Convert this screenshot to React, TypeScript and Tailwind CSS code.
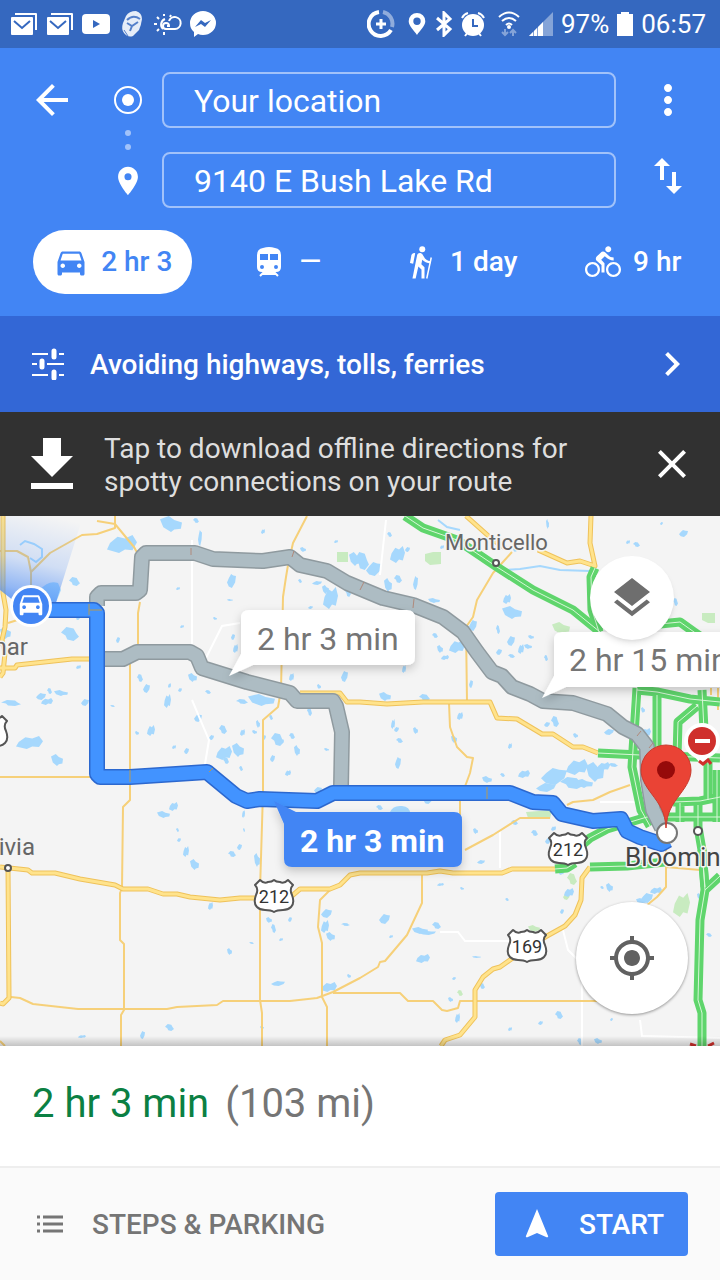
import React from 'react';
import {
  MdArrowBack,
  MdChevronRight,
  MdClose,
  MdDirectionsBike,
  MdDirectionsCar,
  MdLayers,
  MdMoreVert,
  MdMyLocation,
  MdNavigation,
  MdPlace,
  MdSwapVert,
} from 'react-icons/md';

// x, y, width, height of every lake on the map
const LAKES: [number, number, number, number][] = [
  [107, 535, 30, 18], [160, 516, 22, 16], [193, 518, 6, 5], [198, 530, 4, 16], [261, 529, 4, 5], [300, 547, 6, 5],
  [69, 577, 11, 9], [227, 574, 9, 14], [176, 587, 4, 3], [227, 599, 6, 2], [298, 579, 4, 4], [312, 581, 10, 4],
  [323, 587, 15, 22], [322, 585, 7, 9], [345, 587, 6, 10], [308, 606, 5, 3], [334, 540, 4, 3], [349, 552, 12, 14],
  [355, 552, 14, 18], [366, 562, 16, 14], [390, 546, 15, 17], [384, 578, 8, 14], [394, 575, 8, 8], [413, 576, 5, 14],
  [378, 598, 8, 4], [428, 598, 12, 5], [387, 532, 5, 5], [405, 547, 5, 5], [440, 545, 4, 4], [546, 519, 3, 10],
  [633, 542, 7, 5], [679, 530, 9, 7], [626, 540, 4, 4], [513, 548, 4, 4], [673, 598, 5, 8], [660, 522, 3, 3],
  [503, 594, 8, 10], [502, 606, 20, 13], [496, 625, 4, 9], [469, 620, 8, 11], [449, 640, 16, 13], [437, 645, 6, 8],
  [432, 633, 6, 5], [507, 636, 8, 10], [518, 644, 6, 10], [528, 635, 6, 4], [508, 654, 7, 4], [496, 649, 6, 6],
  [441, 655, 8, 5], [524, 644, 8, 5], [544, 655, 4, 6], [469, 680, 4, 8], [402, 665, 4, 8], [379, 692, 12, 9],
  [419, 694, 11, 7], [394, 727, 5, 5], [391, 719, 4, 10], [413, 727, 5, 7], [396, 738, 7, 5], [395, 757, 6, 12],
  [457, 712, 6, 8], [451, 735, 6, 8], [551, 716, 8, 11], [544, 722, 6, 5], [508, 743, 4, 6], [573, 733, 5, 5],
  [61, 627, 18, 14], [76, 617, 4, 3], [76, 665, 5, 4], [0, 627, 11, 12], [1, 700, 20, 6], [36, 693, 10, 7],
  [41, 698, 12, 7], [54, 690, 14, 6], [47, 688, 5, 6], [81, 699, 8, 7], [16, 736, 27, 13], [51, 754, 12, 12],
  [110, 705, 5, 2], [116, 637, 4, 6], [180, 625, 4, 3], [213, 617, 4, 3], [137, 674, 6, 8], [143, 684, 7, 9],
  [164, 694, 7, 14], [188, 673, 9, 9], [205, 690, 6, 4], [178, 688, 4, 4], [168, 683, 3, 5], [248, 694, 27, 12],
  [236, 699, 12, 5], [194, 714, 8, 8], [147, 725, 8, 11], [135, 731, 4, 4], [219, 725, 8, 9], [209, 735, 5, 5],
  [240, 729, 5, 7], [256, 720, 4, 8], [271, 733, 13, 13], [278, 739, 6, 5], [216, 746, 16, 14], [232, 743, 12, 14],
  [223, 757, 6, 7], [184, 748, 5, 6], [172, 745, 4, 4], [294, 745, 6, 11], [289, 733, 6, 6], [270, 755, 5, 7],
  [285, 770, 6, 6], [252, 730, 5, 4], [307, 707, 5, 9], [341, 671, 7, 11], [289, 673, 5, 8], [324, 748, 5, 3],
  [269, 715, 4, 5], [231, 634, 4, 6], [233, 644, 5, 9], [317, 684, 4, 5], [239, 766, 4, 5], [262, 735, 4, 5],
  [169, 802, 9, 9], [157, 811, 13, 7], [176, 828, 3, 4], [177, 838, 4, 4], [183, 846, 6, 11], [190, 859, 9, 11],
  [228, 851, 8, 6], [237, 844, 5, 6], [242, 810, 3, 8], [254, 853, 6, 14], [243, 828, 2, 4], [314, 787, 8, 6],
  [208, 902, 5, 8], [266, 917, 6, 6], [271, 924, 5, 9], [288, 917, 4, 5], [279, 938, 4, 3], [227, 948, 5, 7],
  [249, 942, 5, 2], [321, 909, 11, 9], [321, 920, 8, 13], [326, 932, 9, 9], [341, 923, 9, 3], [271, 981, 14, 5],
  [321, 982, 16, 10], [347, 974, 4, 4], [165, 1024, 9, 7], [140, 1031, 5, 8], [78, 1035, 8, 3], [260, 1026, 4, 3],
  [376, 805, 7, 5], [424, 798, 8, 6], [518, 770, 12, 8], [482, 776, 10, 7], [500, 773, 5, 4],
  [541, 768, 26, 17], [566, 759, 22, 16], [586, 762, 18, 20], [560, 777, 24, 12], [536, 783, 20, 9], [597, 762, 13, 9],
  [575, 779, 18, 9], [608, 763, 10, 4], [604, 729, 10, 6], [641, 728, 10, 9], [641, 707, 4, 6], [531, 830, 7, 6],
  [545, 838, 6, 6], [551, 826, 5, 5], [473, 828, 5, 6], [511, 820, 7, 5], [477, 860, 8, 4], [437, 883, 7, 3],
  [460, 887, 4, 3], [505, 898, 4, 3], [379, 914, 11, 10], [389, 935, 4, 3], [412, 927, 16, 7], [432, 922, 9, 7],
  [420, 931, 16, 4], [416, 954, 14, 9], [472, 956, 9, 2], [479, 983, 6, 6], [452, 977, 4, 3], [455, 1013, 5, 10],
  [448, 997, 5, 5], [555, 1011, 8, 8], [538, 1021, 5, 4], [508, 1027, 4, 4], [594, 1038, 8, 6], [577, 1038, 6, 7],
  [610, 1018, 3, 3], [564, 888, 10, 9], [606, 883, 7, 9], [600, 886, 4, 3], [641, 893, 12, 10], [650, 887, 12, 7],
  [636, 898, 10, 6], [706, 933, 6, 4], [560, 909, 4, 5], [559, 870, 5, 5], [697, 893, 4, 6], [690, 745, 5, 6],
];

const PARKS: [number, number, number, number][] = [
  [552, 622, 18, 12], [567, 873, 10, 12], [563, 893, 7, 7], [673, 893, 17, 24], [528, 925, 12, 7], [457, 990, 6, 6],
];

const THIN_ROADS = [
  'M97 521L115 524L134 547L139 556M115 516V528L97 534L82 535L50 553L31 572V586M0 551H17L28 557L31 572',
  'M140 602L138 613V652M0 777H92M130 664V800L123 807L122 888L120 893V940L124 944V1010L121 1015V1046',
  'M307 516L293 543L288 565L286 577L283 597L281 690L278 707L263 720V792L260 890V1000L262 1013V1046',
  'M512 552L493 573L477 600L473 617L466 627L467 702M449 703L450 727L457 747L467 757L473 758L470 773L460 800V820',
  'M11 997L20 998L33 1004L78 1009H167L177 1007L217 1005L223 1001H290L317 998L333 992L360 978L378 967L380 962L385 961L407 935L422 903V875',
  'M330 890L320 900L318 927L322 943V997L327 1007V1046M333 993H400L408 1001H433L442 1010L447 1011L458 1008L460 1001H600',
  'M465 850L493 835L520 818H550M567 805L573 802L593 800L610 792L630 785M666 850V887L657 897L646 906M666 867L700 870M0 1041L5 1046',
  'M8 623L30 616M718 688V710M711 688V695',
];

const MAIN_ROADS = [
  'M3 516V593L6 610L5 627L2 640L5 653L3 673L0 677',
  'M0 668H15L17 665L72 659H110M300 693H340L347 702H360L387 704L423 702H490L497 718L517 719L542 734H553L573 747H583L598 753',
  'M466 516L493 540L505 548M538 550L567 563L580 561L595 566L590 543L591 516',
  'M0 867L28 870L32 873H55L80 879L115 885L123 889H148L163 894L177 894L190 897L220 900L240 898H273L293 895L300 889H330L340 885L350 875L360 873H427L440 871L453 873H502L512 869H555',
  'M8 868L9 998L3 1004L0 1003',
  'M590 867L582 878L581 900L575 915L565 926L547 936L527 948L510 960L500 967L493 969L483 977L475 990V1017L460 1035L445 1040L441 1046',
];

const HIGHWAYS = [
  'M405 516L423 528L457 540L497 567L533 590L573 610L600 632',
  'M595 568L591 577L592 610L599 632M660 624L680 622L694 632L720 650',
  'M637 688L633 750L632 767L641 810L650 826',
  'M657 695V747M637 690L657 692L690 699L720 702M702 690L704 730',
  'M697 706L678 722L677 757M708 755V800',
  'M598 753L640 755L720 758',
  'M575 851L590 838L607 829L647 817H720M555 869L567 868L575 863M590 867L627 866L665 862',
  'M673 802L700 801L720 797M680 803V822M698 805V827L702 850L705 887M717 770V822',
  'M702 850L705 890L700 920L698 1000L702 1013V1046M705 890L720 876',
];

const ROUTE_NORTH =
  'M97 606V597L101 593H136L140 590L142 557L146 553H195L213 559L263 561L290 557L300 565L327 571L347 583L383 598L413 605L443 617L463 632L477 652L492 672L502 676L512 687L530 694L543 701L573 703L607 714L623 727L637 734L647 747L648 780L653 810L662 828';
const ROUTE_MIDDLE =
  'M100 659H123L137 652H190L197 656L202 668L247 682L290 693L297 701H333L336 706L342 732L341 787';
const ROUTE_MAIN =
  'M40 610H94L97 613V774L100 777H130L207 772L213 777L236 796L247 801L260 799L317 801L333 793H510L533 802L553 803L562 814L593 821L621 819L627 831L640 837L661 844L668 840';

// Uneven outline for a lake or park; k picks one of a few silhouettes
const blobPath = (x: number, y: number, w: number, h: number, k: number) => {
  const shapes = [
    [[0.1, 0.45], [0.35, 0.1], [0.6, 0.2], [0.85, 0], [1, 0.4], [0.85, 0.85], [0.6, 0.8], [0.4, 1], [0, 0.8]],
    [[0, 0.2], [0.4, 0], [0.65, 0.25], [1, 0.4], [0.95, 0.8], [0.65, 0.85], [0.5, 1], [0.15, 0.7]],
    [[0.3, 0], [0.7, 0.1], [0.85, 0.45], [1, 0.7], [0.7, 1], [0.35, 0.9], [0.25, 0.6], [0, 0.4]],
    [[0, 0.6], [0.2, 0.3], [0.45, 0], [0.7, 0.1], [1, 0.15], [0.9, 0.6], [0.55, 1], [0.2, 0.9]],
  ];
  return 'M' + shapes[k % 4].map(([px, py]) => `${(x + px * w).toFixed(1)} ${(y + py * h).toFixed(1)}`).join('L') + 'Z';
};

const Shield = ({ x, y, label }: { x: number; y: number; label: string }) => (
  <g transform={`translate(${x} ${y})`}>
    <path
      d="M-14-16Q-10-12-6-14Q-2-14 0-16Q2-14 6-14Q10-12 14-16L19-11Q15-7 18-1Q21 7 17 11Q14 14 9 14Q3 14 0 16Q-3 14-9 14Q-14 14-17 11Q-21 7-18-1Q-15-7-19-11Z"
      fill="#fff"
      stroke="#555"
      strokeWidth="2"
      strokeLinejoin="round"
    />
    <text y="7" textAnchor="middle" fontSize="18" fill="#333">{label}</text>
  </g>
);

const RouteLine = ({ d, edge, fill }: { d: string; edge: string; fill: string }) => (
  <g fill="none" strokeLinejoin="round">
    <path d={d} stroke={edge} strokeWidth="16" />
    <path d={d} stroke={fill} strokeWidth="13" />
  </g>
);

const RouteMap = () => (
  <svg
    viewBox="0 516 720 530"
    preserveAspectRatio="xMidYMid slice"
    className="absolute inset-0 h-full w-full"
    role="img"
    aria-label="Route map"
  >
    <defs>
      <linearGradient id="beam" x1="0.6" y1="0" x2="0.4" y2="1">
        <stop offset="0" stopColor="#4285f4" stopOpacity="0" />
        <stop offset="0.5" stopColor="#4285f4" stopOpacity="0.2" />
        <stop offset="0.8" stopColor="#4285f4" stopOpacity="0.55" />
        <stop offset="1" stopColor="#4285f4" stopOpacity="0.9" />
      </linearGradient>
      <linearGradient id="edge" x1="0" y1="0" x2="0" y2="1">
        <stop offset="0" stopColor="#000" stopOpacity="0" />
        <stop offset="1" stopColor="#000" stopOpacity="0.2" />
      </linearGradient>
      <filter id="lift" x="-20%" y="-30%" width="140%" height="180%">
        <feDropShadow dx="0" dy="4" stdDeviation="5" floodOpacity="0.2" />
      </filter>
    </defs>
    <rect x="0" y="516" width="720" height="530" fill="#f4f4f4" />

    <g fill="#c8ebc0">
      {PARKS.map(([x, y, w, h], i) => <path key={i} d={blobPath(x, y, w, h, i + 1)} />)}
      <path d="M337 552H348V562H337ZM425 554L433 552H441V564L430 565L425 561ZM702 613H715V623H708L702 620ZM526 812L552 810L550 819L528 818Z" />
    </g>
    <g fill="#a6d8fd">
      {LAKES.map(([x, y, w, h], i) => <path key={i} d={blobPath(x, y, w, h, i)} />)}
      <path d="M390 812Q393 805 402 806Q411 807 410 815Q406 825 398 824Q389 821 390 812ZM40 590Q48 580 58 583L61 590L55 605H38Z" />
    </g>
    <g fill="none" stroke="#a6d8fd" strokeWidth="2">
      <path d="M20 545L25 541L34 544L42 549V557L36 562L30 558M505 570L520 569L540 566L560 570L590 571M438 520L447 527L460 530" />
    </g>
    <g fill="none" stroke="#fff" strokeWidth="2">
      <path d="M192 540V650M192 700L209 740L204 770M240 623L222 626L205 660M380 575L386 520M500 868V830M440 932H458L465 941H510M563 930L568 950L582 964V1046M640 1020L642 1036L720 1038M640 802H600" />
    </g>

    <g fill="none" stroke="#f6d079" strokeWidth="2" strokeLinejoin="round">
      {THIN_ROADS.map(d => <path key={d} d={d} />)}
    </g>
    <g fill="none" strokeLinejoin="round">
      {MAIN_ROADS.map(d => <path key={d} d={d} stroke="#efc25a" strokeWidth="5" />)}
      {MAIN_ROADS.map(d => <path key={d} d={d} stroke="#ffe38c" strokeWidth="3" />)}
    </g>
    <g fill="none" strokeLinejoin="round">
      {HIGHWAYS.map(d => <path key={d} d={d} stroke="#5fd56c" strokeWidth="9" />)}
      {HIGHWAYS.map(d => <path key={d} d={d} stroke="#d8f7d8" strokeWidth="1" />)}
    </g>

    <path d="M0 516H83L53 612H28L0 590Z" fill="url(#beam)" />

    <RouteLine d={ROUTE_NORTH} edge="#8f9a9f" fill="#adbcc3" />
    <RouteLine d={ROUTE_MIDDLE} edge="#8f9a9f" fill="#adbcc3" />
    <RouteLine d={ROUTE_MAIN} edge="#2c68cf" fill="#4293ff" />
    <path d="M89 604V615M89 610H102M130 770V782M209 772L213 768M487 787V799" stroke="#b59a55" strokeWidth="1" fill="none" />
    <path d="M191 548V555M292 557L294 551M360 590L364 582M413 608L414 599M637 736L641 731M649 748L653 743" stroke="#b08a7c" strokeWidth="1" fill="none" />

    {/* Current position */}
    <circle cx="31" cy="606" r="21" fill="#fff" />
    <circle cx="31" cy="606" r="18" fill="#4285f4" />
    <MdDirectionsCar x="16" y="589" size={30} color="#fff" />

    <g fill="#666" fontSize="22" stroke="#f4f4f4" strokeWidth="3" paintOrder="stroke" strokeLinejoin="round">
      <text x="445" y="550">Monticello</text>
      <text x="28" y="655" fontSize="24" textAnchor="end">Willmar</text>
      <text x="35" y="855" fontSize="24" textAnchor="end">Olivia</text>
      <text x="625" y="866" fontSize="26" fill="#444">Bloomington</text>
    </g>
    <g fill="#fff" stroke="#555" strokeWidth="2">
      <circle cx="496" cy="563" r="3" />
      <circle cx="8" cy="868" r="3" />
      <circle cx="698" cy="831" r="4" />
    </g>
    <Shield x={274} y={896} label="212" />
    <Shield x={568} y={849} label="212" />
    <Shield x={527} y={946} label="169" />
    <Shield x={-12} y={732} label="71" />

    {/* Road closure */}
    <path d="M691 753L702 765L713 753Z" fill="#fff" />
    <circle cx="702" cy="741" r="18" fill="#fff" />
    <circle cx="702" cy="741" r="14" fill="#cf2f2c" />
    <rect x="695" y="739" width="15" height="4" fill="#fff" />
    <path d="M699 761L703 764L708 760L711 764M690 1044L696 1046M708 1046L714 1043" stroke="#cf2f2c" strokeWidth="3" fill="none" />

    {/* Destination */}
    <circle cx="667" cy="833" r="10" fill="#fff" stroke="#777" strokeWidth="2" />
    <path d="M666 828C665 812 660 805 651 793C645 785 641 778 641 770A25 25 0 0 1 691 770C691 778 687 785 681 793C672 805 667 812 666 828Z" fill="#ea4335" stroke="#c93b2e" strokeWidth="1" />
    <circle cx="666" cy="770" r="9" fill="#960a0a" />

    {/* Route callouts */}
    <g filter="url(#lift)" fill="#fff">
      <path d="M249 610H407Q415 610 415 618V657Q415 665 407 665H253L229 676L241 654V618Q241 610 249 610Z" />
    </g>
    <g filter="url(#lift)" fill="#fff">
      <path d="M562 632H740V687H566L542 698L554 676V640Q554 632 562 632Z" />
    </g>
    <g filter="url(#lift)" fill="#4285f4">
      <path d="M296 812H454Q462 812 462 820V859Q462 867 454 867H292Q284 867 284 859V824L274 801Z" />
    </g>
    <g fontSize="32" fill="#757575">
      <text x="257" y="650">2 hr 3 min</text>
      <text x="569" y="671">2 hr 15 min</text>
      <text x="300" y="852" fill="#fff" fontWeight="700">2 hr 3 min</text>
    </g>
    <rect x="0" y="1036" width="720" height="10" fill="url(#edge)" />
  </svg>
);

const MailIcon = () => (
  <svg viewBox="0 0 28 24" className="h-6 w-7">
    <path d="M5 2H26V18" fill="none" stroke="#fff" strokeWidth="2" strokeLinejoin="round" />
    <rect x="1" y="5" width="22" height="18" rx="1" fill="#fff" />
    <path d="M4 9L12 16L20 9" fill="none" stroke="#3568bf" strokeWidth="2" />
  </svg>
);

const StatusBar = () => (
  <div className="flex h-12 items-center justify-between bg-[#3568bf] pl-[10px] pr-[14px] text-white">
    <div className="flex items-center gap-2">
      <MailIcon />
      <MailIcon />
      <svg viewBox="0 0 28 20" className="h-5 w-7">
        <rect width="28" height="20" rx="4" fill="#fff" />
        <path d="M11 6L18 10L11 14Z" fill="#3568bf" />
      </svg>
      <svg viewBox="0 0 28 28" className="h-7 w-7">
        <path d="M8 6Q11 1 18 1Q24 3 24 9Q23 16 21 20L15 26Q10 28 6 23Q3 19 5 13Z" fill="#e6edf8" />
        <path d="M9 10Q15 4 22 9M9 13L14 16L20 12M14 16L12 21" fill="none" stroke="#5580ca" strokeWidth="2" />
        <path d="M6 20L10 26" fill="none" stroke="#5580ca" strokeWidth="1" />
      </svg>
      <svg viewBox="0 0 28 24" className="h-6 w-7">
        <path d="M13 14H15A3 3 0 1 0 12 17H21A6 6 0 1 0 15 9" fill="none" stroke="#fff" strokeWidth="2" />
        <path d="M11 7A6 6 0 0 0 9 17" fill="none" stroke="#fff" strokeWidth="2" />
        <path d="M10 2V4M3 5L5 7M0 12H3M3 19L5 17M10 20V23M17 3L16 5" stroke="#fff" strokeWidth="2" />
      </svg>
      <svg viewBox="0 0 26 26" className="h-[26px] w-[26px]">
        <path d="M13 0A13 12 0 0 1 13 24Q10 24 8 23L4 26V21Q0 18 0 12A13 12 0 0 1 13 0Z" fill="#fff" />
        <path d="M5 16L11 9L15 12L21 9L15 16L11 13Z" fill="#3568bf" />
      </svg>
    </div>
    <div className="flex items-center gap-2">
      <svg viewBox="0 0 28 28" className="h-7 w-7">
        <g fill="none" stroke="#fff" strokeWidth="4">
          <path d="M12 2A12 12 0 1 0 24 20" />
          <path d="M16 2A12 12 0 0 1 25 17" opacity="0.45" />
        </g>
        <path d="M14 9V19M9 14H19" stroke="#fff" strokeWidth="3" />
      </svg>
      <svg viewBox="0 0 20 26" className="ml-1 h-6 w-5">
        <path fillRule="evenodd" d="M10 1A9 9 0 0 1 19 10C19 15 13 20 10 25C7 20 1 15 1 10A9 9 0 0 1 10 1ZM10 6A4 4 0 1 0 10 14A4 4 0 1 0 10 6Z" fill="#fff" />
      </svg>
      <svg viewBox="0 0 18 26" className="h-[26px] w-[18px]">
        <path d="M2 7L15 18L9 24V2L15 8L2 19" fill="none" stroke="#fff" strokeWidth="3" />
      </svg>
      <svg viewBox="0 0 24 26" className="h-[26px] w-6">
        <circle cx="12" cy="14" r="11" fill="#fff" />
        <path d="M1 7Q3 3 7 2M23 7Q21 3 17 2M4 25L7 21M20 25L17 21" stroke="#fff" strokeWidth="2" fill="none" />
        <path d="M12 8V15H17" stroke="#3568bf" strokeWidth="2" fill="none" />
      </svg>
      <svg viewBox="0 0 24 26" className="ml-1 h-[26px] w-6">
        <path d="M2 6Q12-3 22 6M5 10Q12 4 19 10M9 14Q12 11 15 14" stroke="#fff" strokeWidth="2" fill="none" />
        <circle cx="12" cy="16" r="2" fill="#fff" />
        <path d="M8 18V24M5 21L8 24L11 21M16 25V19M13 22L16 19L19 22" stroke="#fff" strokeWidth="2" fill="none" opacity="0.4" />
      </svg>
      <svg viewBox="0 0 24 24" className="h-6 w-6">
        <path d="M0 24L24 0V24Z" fill="#fff" opacity="0.4" />
        <path d="M0 24L4 20V24ZM5 24V19L8 16V24ZM9 24V15L14 10V24Z" fill="#fff" />
      </svg>
      <span className="text-[26px] leading-8">97%</span>
      <svg viewBox="0 0 16 24" className="h-6 w-4">
        <path d="M4 0H12V2H16V24H0V2H4Z" fill="#fff" />
      </svg>
      <span className="text-[26px] leading-8">06:57</span>
    </div>
  </div>
);

const TrainIcon = () => (
  <svg viewBox="0 0 36 36" className="h-9 w-9" fill="#fff">
    <path
      fillRule="evenodd"
      d="M12 4Q18 2 24 4Q30 5 30 11V23Q30 28 25 28H11Q6 28 6 23V11Q6 5 12 4ZM9 10V16H17V10ZM19 10V16H27V10ZM11 21A2 2 0 1 0 11 25A2 2 0 1 0 11 21ZM25 21A2 2 0 1 0 25 25A2 2 0 1 0 25 21Z"
    />
    <path d="M9 32L13 28H23L27 32M12 30H24" fill="none" stroke="#fff" strokeWidth="2" />
  </svg>
);

const HikerIcon = () => (
  <svg viewBox="0 0 24 24" className="h-9 w-9" fill="currentColor">
    <circle cx="13.5" cy="3.5" r="2" />
    <path d="M19 11.5c-2-.3-3.700-1.500-4.300-2.900l-1-1.600c-.41-.65-1.110-1-1.840-1-.78 0-1.590.5-1.780 1.440S7 23 7 23h2.100l1.800-8 2.100 2v6h2v-7.500l-2.100-2 .6-3c1 1.150 3.300 2.300 5.500 2.500z" />
    <path d="M7.430 13.130l-2.120-.41.9-5.100c.21-1.080 1.260-1.790 2.340-1.580l.23.230z" />
    <path d="M19.500 9L16.500 23" stroke="currentColor" strokeWidth="1" />
  </svg>
);

interface ModeTabProps {
  icon: React.ReactNode;
  label: string;
  name: string;
  active?: boolean;
}

const ModeTab: React.FC<ModeTabProps> = ({ icon, label, name, active }) => (
  <button
    type="button"
    aria-label={name}
    aria-pressed={!!active}
    className={`flex h-16 items-center gap-3 whitespace-nowrap rounded-full px-5 text-[28px] font-medium ${
      active ? 'bg-white text-[#4285f4]' : 'text-white'
    }`}
  >
    {icon}
    <span>{label}</span>
  </button>
);

const App: React.FC = () => {
  return (
    <div className="flex min-h-screen flex-col bg-white font-[Roboto,sans-serif]">
      <StatusBar />

      <header className="flex flex-col bg-[#4285f4] pb-[22px] pt-6 text-white">
        <div className="flex px-7">
          <button type="button" aria-label="Back" className="mt-1 h-12 w-12">
            <MdArrowBack className="h-12 w-12" />
          </button>
          <div className="ml-8 flex w-10 flex-col items-center pt-[14px]">
            <svg viewBox="0 0 28 28" className="h-7 w-7">
              <circle cx="14" cy="14" r="13" fill="none" stroke="#fff" strokeWidth="2" />
              <circle cx="14" cy="14" r="6" fill="#fff" />
            </svg>
            <div className="flex flex-col gap-2 pb-[14px] pt-4">
              <span className="h-[6px] w-[6px] rounded-full bg-white/50" />
              <span className="h-[6px] w-[6px] rounded-full bg-white/50" />
            </div>
            <MdPlace className="h-[34px] w-[34px]" />
          </div>
          <div className="ml-[14px] flex flex-1 flex-col gap-6">
            <input
              aria-label="Start"
              defaultValue="Your location"
              className="h-14 w-full rounded-lg border-2 border-white/50 bg-transparent px-[30px] pt-[2px] text-[32px] outline-none"
            />
            <input
              aria-label="Destination"
              defaultValue="9140 E Bush Lake Rd"
              className="h-14 w-full rounded-lg border-2 border-white/50 bg-transparent px-[30px] pt-[2px] text-[32px] outline-none"
            />
          </div>
          <div className="ml-7 flex flex-col gap-7 pt-1">
            <button type="button" aria-label="More options" className="h-12 w-12">
              <MdMoreVert className="h-12 w-12" />
            </button>
            <button type="button" aria-label="Swap start and destination" className="h-12 w-12">
              <MdSwapVert className="h-12 w-12" />
            </button>
          </div>
        </div>

        <div className="mt-[22px] grid grid-cols-4 justify-items-center pl-[26px]">
          <ModeTab name="Driving" label="2 hr 3" active icon={<MdDirectionsCar className="h-9 w-9" />} />
          <ModeTab name="Transit" label="—" icon={<TrainIcon />} />
          <ModeTab name="Walking" label="1 day" icon={<HikerIcon />} />
          <ModeTab name="Cycling" label="9 hr" icon={<MdDirectionsBike className="h-9 w-9" />} />
        </div>
      </header>

      <button type="button" className="flex h-24 items-center bg-[#3367d6] pl-8 pr-6 text-left text-white">
        <svg viewBox="0 0 32 32" className="h-8 w-8" stroke="#fff" fill="none">
          <path d="M0 6H16M27 6H32M0 16H5M15 16H32M0 27H16M27 27H32" strokeWidth="2" />
          <path d="M22 3V9M10 13V19M22 24V30" strokeWidth="5" strokeLinecap="round" />
        </svg>
        <span className="ml-[26px] flex-1 pt-[2px] text-[28px] font-medium">Avoiding highways, tolls, ferries</span>
        <MdChevronRight className="h-12 w-12" />
      </button>

      <div className="flex h-[104px] items-center bg-[#313131] pl-[30px] pr-6">
        <svg viewBox="0 0 44 52" className="h-[52px] w-11" fill="#fff">
          <path d="M13 0H31V18H43L22 39L1 18H13ZM1 45H43V51H1Z" />
        </svg>
        <p className="ml-[30px] flex-1 pr-16 pt-[2px] text-[28px] leading-[33px] text-[#dedede]">
          Tap to download offline directions for spotty connections on your route
        </p>
        <button type="button" aria-label="Dismiss" className="text-white">
          <MdClose className="h-12 w-12" />
        </button>
      </div>

      <main className="relative min-h-96 flex-1 overflow-hidden">
        <RouteMap />
        <button
          type="button"
          aria-label="Map layers"
          className="absolute right-[46px] top-10 flex h-[84px] w-[84px] items-center justify-center rounded-full bg-white text-[#6e6e6e] shadow-md"
        >
          <MdLayers className="h-12 w-12" />
        </button>
        <button
          type="button"
          aria-label="My location"
          className="absolute bottom-8 right-8 flex h-28 w-28 items-center justify-center rounded-full bg-white text-[#616161] shadow-[0_1px_3px_rgba(0,0,0,0.4)]"
        >
          <MdMyLocation className="h-12 w-12" />
        </button>
      </main>

      <section className="flex h-[120px] items-center gap-4 px-8 pb-1 text-[40px]">
        <span className="text-[#0b8043]">2 hr 3 min</span>
        <span className="text-[#757575]">(103 mi)</span>
      </section>

      <footer className="flex items-center justify-between border-t-2 border-[#eee] bg-[#fafafa] py-6 pl-9 pr-8">
        <button type="button" className="flex items-center gap-7 text-[28px] font-medium text-[#757575]">
          <svg viewBox="0 0 28 20" className="h-5 w-7" stroke="#757575" strokeWidth="3">
            <path d="M1 3H4M1 10H4M1 17H4M7 3H27M7 10H27M7 17H27" />
          </svg>
          <span className="pt-[2px]">STEPS &amp; PARKING</span>
        </button>
        <button
          type="button"
          className="flex h-16 items-center gap-6 rounded bg-[#4285f4] px-6 text-[28px] font-medium text-white"
        >
          <MdNavigation className="h-9 w-9" />
          <span className="pt-[2px]">START</span>
        </button>
      </footer>
    </div>
  );
};

export default App;
